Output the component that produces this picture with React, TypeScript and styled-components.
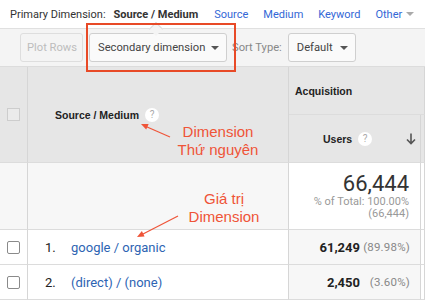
import React from 'react';
import styled, { createGlobalStyle } from 'styled-components';

const Global = createGlobalStyle`
  html, body { margin: 0; padding: 0; background: #fff; }
  body { width: 425px; height: 302px; overflow: hidden; font-family: Roboto, "Liberation Sans", Arial, sans-serif; white-space: nowrap; }
  * { box-sizing: border-box; }
`;

const Page = styled.div`
  position: relative;
  width: 425px;
  height: 302px;
  overflow: hidden;
`;

const TopBar = styled.div`
  height: 29px;
  display: flex;
  align-items: center;
  padding-left: 10px;
  font-size: 11px;
  color: #333;
  border-bottom: 1px solid #e0e0e0;
  gap: 15px;
  & > * { flex-shrink: 0; }
`;

const PrimaryLabel = styled.span`
  margin-right: -7px;
`;

const Current = styled.span`
  font-weight: 700;
  color: #333;
  margin-right: 1px;
`;

const DimLink = styled.a`
  color: #3367d6;
  text-decoration: none;
  display: inline-flex;
  align-items: center;
  gap: 4px;
`;

const Caret = styled.span<{ $color?: string }>`
  display: inline-block;
  flex-shrink: 0;
  width: 0;
  height: 0;
  border-left: 4px solid transparent;
  border-right: 4px solid transparent;
  border-top: 4px solid ${p => p.$color || '#555'};
`;

const Toolbar = styled.div`
  position: relative;
  height: 38px;
  background: #f4f4f4;
  border-bottom: 1px solid #dcdcdc;
  display: flex;
  align-items: center;
  padding-left: 20px;
  font-size: 11px;
  & > * { flex-shrink: 0; }
  &::before {
    content: '';
    position: absolute;
    left: 151px;
    top: -5px;
    width: 9px;
    height: 9px;
    background: #f4f4f4;
    border-left: 1px solid #dcdcdc;
    border-top: 1px solid #dcdcdc;
    transform: rotate(45deg);
  }
`;

const Button = styled.button<{ $disabled?: boolean; $width: number }>`
  height: 29px;
  width: ${p => p.$width}px;
  padding: 0 7px 0 8px;
  border: 1px solid ${p => (p.$disabled ? '#dedede' : '#cfcfcf')};
  border-radius: 3px;
  background: ${p => (p.$disabled ? '#f4f4f4' : '#fafafa')};
  color: ${p => (p.$disabled ? '#bdbdbd' : '#444')};
  font-family: Roboto, "Liberation Sans", Arial, sans-serif;
  font-size: 11.2px;
  white-space: nowrap;
  display: flex;
  align-items: center;
  justify-content: ${p => (p.$disabled ? 'center' : 'space-between')};
  margin-right: 6px;
`;

const SortLabel = styled.span`
  color: #888;
  font-size: 11.2px;
  margin: 0 6px 0 -1px;
`;

const Table = styled.div`
  display: grid;
  grid-template-columns: 28px 261px 132px 1fr;
  grid-template-rows: 48px 48px 67px 35px 35px 1fr;
  height: 235px;
  font-size: 12px;
`;

const Cell = styled.div<{ $bg?: string; $row: string; $col: string }>`
  grid-row: ${p => p.$row};
  grid-column: ${p => p.$col};
  background: ${p => p.$bg || '#fff'};
  border-right: 1px solid #d6d6d6;
  border-bottom: 1px solid #dcdcdc;
  display: flex;
  align-items: center;
  min-width: 0;
`;

const CheckCell = styled(Cell)`
  justify-content: center;
  padding-right: 1px;
`;

const HeadText = styled.span`
  font-family: "Liberation Sans", Arial, sans-serif;
  font-weight: 700;
  font-size: 10.5px;
  color: #222;
`;

const HeadDim = styled(Cell)`
  padding-left: 27px;
`;

const AcqCell = styled(Cell)`
  padding-left: 6px;
`;

const UsersCell = styled(Cell)`
  padding-left: 34px;
  padding-right: 4px;
`;

const Help = styled.span`
  width: 14px;
  height: 14px;
  border-radius: 50%;
  background: #fff;
  color: #aaa;
  font-size: 10px;
  display: inline-flex;
  align-items: center;
  justify-content: center;
  margin-left: 6px;
  flex-shrink: 0;
`;

const SortArrow = styled.svg`
  margin-left: auto;
`;

const Box = styled.span<{ $head?: boolean }>`
  width: 13px;
  height: 13px;
  border: 1px solid ${p => (p.$head ? '#cdcdcd' : '#8a8a8a')};
  border-radius: ${p => (p.$head ? '0' : '2px')};
  background: ${p => (p.$head ? '#ebebeb' : '#fff')};
`;

const SummaryCell = styled(Cell)`
  flex-direction: column;
  align-items: flex-end;
  justify-content: flex-start;
  padding: 9px 11px 0 0;
  color: #999;
  font-size: 11px;
  line-height: 12px;
`;

const Big = styled.div`
  font-size: 22px;
  line-height: 24px;
  color: #333;
`;

const DimCell = styled(Cell)`
  padding-left: 17px;
  font-size: 13px;
`;

const RowNum = styled.span`
  width: 26px;
  color: #222;
`;

const RowLink = styled.a`
  color: #2d64b3;
  text-decoration: none;
`;

const MetricCell = styled(Cell)`
  justify-content: flex-end;
  padding-right: 10px;
`;

const Value = styled.span`
  font-weight: 700;
  font-size: 13px;
  color: #222;
`;

const Pct = styled.span`
  width: 50px;
  text-align: right;
  color: #888;
  font-size: 11.5px;
  letter-spacing: 0.2px;
`;

const RedFrame = styled.div`
  position: absolute;
  left: 86px;
  top: 23px;
  width: 150px;
  height: 49px;
  border: 2px solid #e84a27;
  pointer-events: none;
`;

const Note = styled.div<{ $x: number; $y: number }>`
  position: absolute;
  left: ${p => p.$x}px;
  top: ${p => p.$y}px;
  width: 100px;
  text-align: center;
  font-family: "Liberation Sans", Arial, sans-serif;
  font-size: 15px;
  line-height: 18px;
  color: #ef5438;
  pointer-events: none;
`;

const Arrows = styled.svg`
  position: absolute;
  left: 0;
  top: 0;
  pointer-events: none;
`;

const rows = [
  { n: '1.', name: 'google / organic', v: '61,249', p: '(89.98%)' },
  { n: '2.', name: '(direct) / (none)', v: '2,450', p: '(3.60%)' },
];

export default function App() {
  return (
    <Page>
      <Global />
      <TopBar>
        <PrimaryLabel>Primary Dimension:</PrimaryLabel>
        <Current>Source / Medium</Current>
        <DimLink>Source</DimLink>
        <DimLink>Medium</DimLink>
        <DimLink>Keyword</DimLink>
        <DimLink>
          Other <Caret $color="#aaa" />
        </DimLink>
      </TopBar>
      <Toolbar>
        <Button $disabled $width={63}>Plot Rows</Button>
        <Button $width={138}>
          Secondary dimension <Caret />
        </Button>
        <SortLabel>Sort Type:</SortLabel>
        <Button $width={68}>
          Default <Caret />
        </Button>
      </Toolbar>
      <Table>
        <CheckCell $row="1 / 3" $col="1" $bg="#e6e6e6">
          <Box $head />
        </CheckCell>
        <HeadDim $row="1 / 3" $col="2" $bg="#e6e6e6">
          <HeadText>Source / Medium</HeadText>
          <Help>?</Help>
        </HeadDim>
        <AcqCell $row="1" $col="3 / 5" $bg="#e6e6e6">
          <HeadText>Acquisition</HeadText>
        </AcqCell>
        <UsersCell $row="2" $col="3" $bg="#e6e6e6">
          <HeadText>Users</HeadText>
          <Help>?</Help>
          <SortArrow width="10" height="12" viewBox="0 0 10 12">
            <path d="M5 0.5 V10.5 M1 6.5 L5 10.5 L9 6.5" stroke="#555" strokeWidth="1.6" fill="none" />
          </SortArrow>
        </UsersCell>
        <Cell $row="2" $col="4" $bg="#e6e6e6" />

        <Cell $row="3" $col="1" $bg="#f7f7f7" />
        <Cell $row="3" $col="2" $bg="#f7f7f7" />
        <SummaryCell $row="3" $col="3">
          <Big>66,444</Big>
          <div>% of Total: 100.00%</div>
          <div>(66,444)</div>
        </SummaryCell>
        <Cell $row="3" $col="4" />

        {rows.map((r, i) => (
          <React.Fragment key={r.n}>
            <CheckCell $row={String(4 + i)} $col="1">
              <Box />
            </CheckCell>
            <DimCell $row={String(4 + i)} $col="2">
              <RowNum>{r.n}</RowNum>
              <RowLink>{r.name}</RowLink>
            </DimCell>
            <MetricCell $row={String(4 + i)} $col="3" $bg="#f7f7f7">
              <Value>{r.v}</Value>
              <Pct>{r.p}</Pct>
            </MetricCell>
            <Cell $row={String(4 + i)} $col="4" />
          </React.Fragment>
        ))}
      </Table>

      <RedFrame />
      <Note $x={168} $y={123}>
        Dimension
        <br />
        Thứ nguyên
      </Note>
      <Note $x={174} $y={190}>
        Giá trị
        <br />
        Dimension
      </Note>
      <Arrows width="425" height="302" viewBox="0 0 425 302">
        <line x1="170" y1="137" x2="146" y2="126.5" stroke="#ef5438" strokeWidth="1.2" />
        <polygon points="141,124 148.6,124.1 146.2,129.6" fill="#ef5438" />
        <line x1="178" y1="216" x2="142" y2="234.5" stroke="#ef5438" strokeWidth="1.2" />
        <polygon points="137,237 144.6,236.5 141.9,231.1" fill="#ef5438" />
      </Arrows>
    </Page>
  );
}
